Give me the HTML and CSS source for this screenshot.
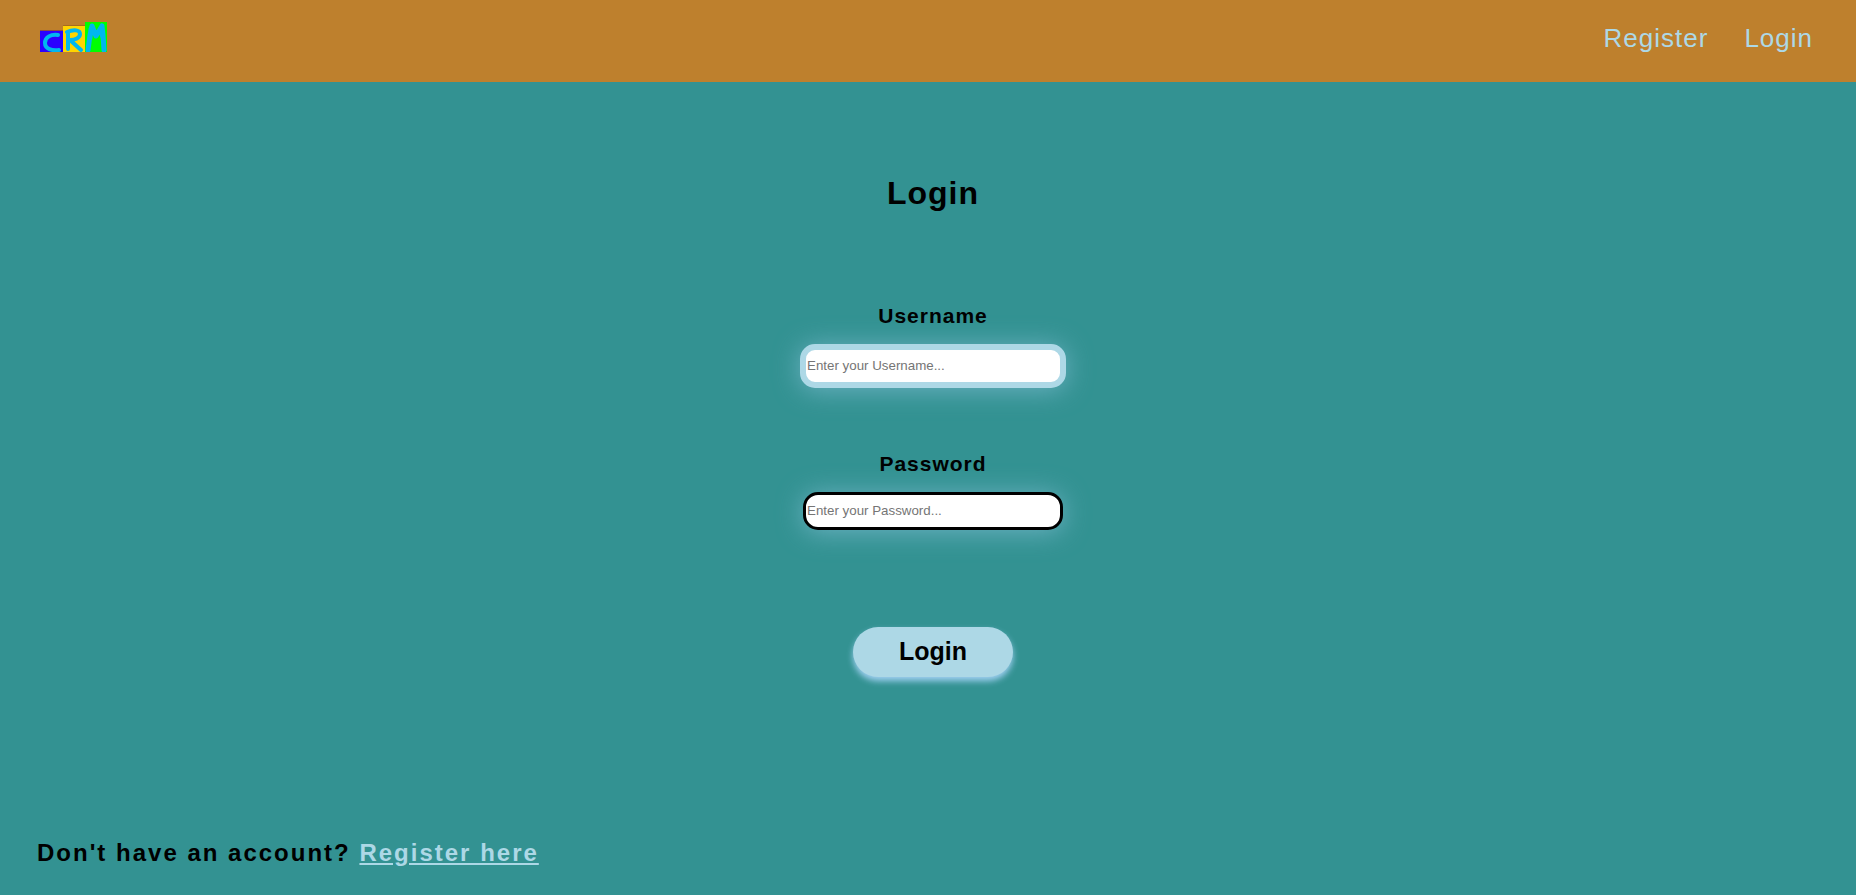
FILE: index.html
```html
<!DOCTYPE html>
<html lang="en">
<head>
<meta charset="utf-8">
<title>CRM Login</title>
<link rel="stylesheet" href="styles.css">
</head>
<body>
<header class="navbar">
  <a class="logo" href="#" aria-label="CRM home">
    <svg width="68" height="30" viewBox="0 0 68 30" aria-hidden="true">
      <path fill="#8b4a50" d="M0 8h23v2H0z"/>
      <path fill="#a86a20" d="M23 3h22v2H23z"/>
      <path fill="#2b00ff" d="M0 9h23v21H0z"/>
      <path fill="#ffd500" d="M23 4h22v26H23z"/>
      <path fill="#00ff00" d="M45 0h22v30H45z"/>
      <g fill="none" stroke="#00b7ef" stroke-width="4" stroke-linecap="round" stroke-linejoin="round">
        <path d="M18 13C11 12 5 15 5 21c0 6 7 8 14 7"/>
        <path d="M28 27V11M27 10c7-3 13-2 13 2 0 4-5 6-10 6l11 10"/>
        <path stroke-width="5" d="M48 28l2-15 2-9 4 10 6-10 1 9 1 15M51 7l-1 9M61 7l2 9"/>
      </g>
    </svg>
  </a>
  <nav class="nav-links">
    <a href="#register">Register</a>
    <a href="#login">Login</a>
  </nav>
</header>
<main class="page">
  <form class="login-form" id="login">
    <h1 class="title">Login</h1>
    <div class="field">
      <label for="username">Username</label>
      <input class="text-input active" id="username" type="text" placeholder="Enter your Username...">
    </div>
    <div class="field">
      <label for="password">Password</label>
      <input class="text-input" id="password" type="password" placeholder="Enter your Password...">
    </div>
    <button class="submit" type="submit">Login</button>
  </form>
  <p class="signup">Don't have an account? <a href="#register">Register here</a></p>
</main>
</body>
</html>
```
FILE: styles.css
```css
* {
  box-sizing: border-box;
}

body {
  margin: 0;
  min-height: 100vh;
  background: #339292;
  color: #000;
  font-family: "Liberation Sans", Arial, sans-serif;
  letter-spacing: 1px;
}

.navbar {
  display: flex;
  justify-content: space-between;
  align-items: flex-start;
  padding: 22px 43px 28px 40px;
  background: #be802d;
}

.logo,
.logo svg {
  display: block;
}

.nav-links {
  display: flex;
  gap: 36px;
}

.nav-links a {
  color: lightblue;
  font-size: 26px;
  line-height: 32px;
  text-decoration: none;
}

.login-form {
  display: flex;
  flex-direction: column;
  align-items: center;
  padding: 92px 0 0 10px;
}

.title {
  margin: 0 0 91px;
  font-size: 32px;
  line-height: 38px;
}

.field {
  display: flex;
  flex-direction: column;
  align-items: center;
  gap: 15px;
  margin-bottom: 63px;
}

.field label {
  font-size: 21px;
  font-weight: bold;
  line-height: 26px;
}

.text-input {
  width: 260px;
  height: 38px;
  padding: 0 1px 1px;
  border: 3px solid #000;
  border-radius: 15px;
  outline: none;
  background: #fff;
  font-family: inherit;
  box-shadow: 0 2px 26px #6cb2c2;
}

.text-input.active {
  width: 266px;
  height: 44px;
  border: 6px solid lightblue;
}

.submit {
  width: 160px;
  height: 50px;
  margin-top: 34px;
  padding: 0 0 2px;
  border: 0;
  border-radius: 30px;
  background: lightblue;
  color: #000;
  font-family: inherit;
  font-size: 25px;
  font-weight: bold;
  box-shadow: 0 4px 6px #9fcff0;
}

.signup {
  margin: 160px 0 0;
  padding: 0 37px 20px;
  font-size: 24px;
  font-weight: bold;
  line-height: 32px;
  letter-spacing: 2px;
}

.signup a {
  color: lightblue;
}
```
